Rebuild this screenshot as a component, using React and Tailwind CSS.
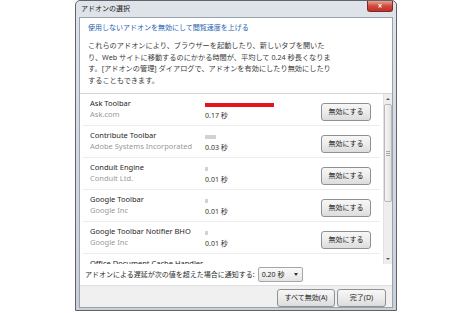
// Internet Explorer "アドオンの選択" dialog, Windows 7 style.

const ADDONS = [
  { name: 'Ask Toolbar', vendor: 'Ask.com', time: '0.17 秒', bar: 69, slow: true },
  { name: 'Contribute Toolbar', vendor: 'Adobe Systems Incorporated', time: '0.03 秒', bar: 11 },
  { name: 'Conduit Engine', vendor: 'Conduit Ltd.', time: '0.01 秒', bar: 3 },
  { name: 'Google Toolbar', vendor: 'Google Inc', time: '0.01 秒', bar: 3 },
  { name: 'Google Toolbar Notifier BHO', vendor: 'Google Inc', time: '0.01 秒', bar: 3 },
  // only the top of this row shows above the list's bottom edge
  { name: 'Office Document Cache Handler', partial: true },
]

const BTN =
  'flex items-center justify-center rounded-[3px] border border-[#8f9091] bg-gradient-to-b from-[#f7f7f7] via-[#ececec] to-[#dcdcdc] text-[7px] leading-[10px] text-[#1e1e1e]'

function AddonRow({ addon }) {
  if (addon.partial) {
    return (
      <div className="h-[32px] shrink-0 mx-[3px] pl-[7px] pt-[4px] flex flex-col">
        <span className="text-[7.5px] leading-[10px] text-[#1e1e1e] whitespace-nowrap">{addon.name}</span>
      </div>
    )
  }

  return (
    <div className="h-[32px] shrink-0 flex border-b border-[#ececec] mx-[3px]">
      {/* name + vendor */}
      <div className="w-[122px] pl-[7px] pt-[4px] flex flex-col">
        <span className="text-[7.5px] leading-[10px] text-[#1e1e1e] whitespace-nowrap">{addon.name}</span>
        <span className="mt-[1px] text-[7.5px] leading-[10px] text-[#9a9a9a] whitespace-nowrap">{addon.vendor}</span>
      </div>

      {/* load time bar */}
      <div className="w-[116px] pt-[9px] flex flex-col">
        <div
          className={`h-[4px] ${addon.slow ? 'bg-[#e8121a]' : 'bg-[#d2d2d2]'}`}
          style={{ width: addon.bar }}
        />
        <span className="mt-[4px] text-[7px] leading-[10px] text-[#333]">{addon.time}</span>
      </div>

      <div className="pt-[9px]">
        <button className={`${BTN} w-[50px] h-[18px]`}>無効にする</button>
      </div>
    </div>
  )
}

function Scrollbar() {
  return (
    <div className="w-[9px] shrink-0 bg-[#eeeeee] border-l border-[#e2e2e2] flex flex-col items-center">
      <div className="h-[10px] flex items-center justify-center">
        <div className="w-0 h-0 border-l-[2px] border-r-[2px] border-b-[2px] border-l-transparent border-r-transparent border-b-[#555]" />
      </div>
      <div className="w-[8px] h-[98px] rounded-[2px] border border-[#b8b8b8] bg-gradient-to-r from-[#f6f6f6] to-[#e2e2e2] flex flex-col items-center justify-center gap-[1px]">
        <div className="w-[4px] h-px bg-[#a8a8a8]" />
        <div className="w-[4px] h-px bg-[#a8a8a8]" />
        <div className="w-[4px] h-px bg-[#a8a8a8]" />
      </div>
      <div className="mt-auto h-[10px] flex items-center justify-center">
        <div className="w-0 h-0 border-l-[2px] border-r-[2px] border-t-[2px] border-l-transparent border-r-transparent border-t-[#555]" />
      </div>
    </div>
  )
}

export default function App() {
  return (
    <div className="w-[470px] h-[313px] bg-white overflow-hidden font-['Noto_Sans','Noto_Sans_CJK_JP',sans-serif]">
      {/* window frame */}
      <div className="ml-[75px] w-[322px] h-[311px] flex flex-col rounded-t-[5px] border border-[#5f646b] bg-gradient-to-b from-[#dfe4ea] via-[#d3d9e0] to-[#c9d0d8] px-[3px] pb-[2px]">
        {/* title bar */}
        <div className="h-[16px] shrink-0 flex items-start">
          <span className="mt-[3px] ml-[2px] text-[7px] leading-[9px] text-[#1b1b1b]">アドオンの選択</span>
          <div className="ml-auto w-[26px] h-[11px] rounded-b-[3px] border border-t-0 border-[#7a2c24] bg-gradient-to-b from-[#e9a193] via-[#d2493a] to-[#c0302a] flex items-center justify-center text-[8px] leading-none font-bold text-white">
            ×
          </div>
        </div>

        {/* client area */}
        <div className="flex-1 flex flex-col bg-white border border-[#9aa2ab]">
          <p className="mt-[5px] pl-[8px] text-[7px] leading-[10px] text-[#2563b0] whitespace-nowrap">
            使用しないアドオンを無効にして閲覧速度を上げる
          </p>
          <div className="mt-[7px] pl-[8px] text-[7.2px] leading-[11.5px] text-[#3a3a3a] whitespace-nowrap flex flex-col">
            <span>これらのアドオンにより、ブラウザーを起動したり、新しいタブを開いた</span>
            <span>り、Web サイトに移動するのにかかる時間が、平均して 0.24 秒長くなりま</span>
            <span>す。[アドオンの管理] ダイアログで、アドオンを有効にしたり無効にしたり</span>
            <span>することもできます。</span>
          </div>

          {/* add-on list */}
          <div className="mt-[7px] h-[171px] shrink-0 flex border-t border-[#d4d4d4] overflow-hidden">
            <div className="flex-1 flex flex-col overflow-hidden">
              {ADDONS.map((a) => (
                <AddonRow key={a.name} addon={a} />
              ))}
            </div>
            <Scrollbar />
          </div>

          {/* notify threshold */}
          <div className="h-[21px] shrink-0 flex items-center pl-[5px]">
            <span className="text-[7px] leading-[10px] text-[#2a2a2a] whitespace-nowrap">
              アドオンによる遅延が次の値を超えた場合に通知する:
            </span>
            <div className="ml-[3px] w-[45px] h-[15px] rounded-[2px] border border-[#a6a6a6] bg-gradient-to-b from-[#fafafa] to-[#e4e4e4] flex items-center pl-[3px] pr-[4px]">
              <span className="text-[7px] leading-[10px] text-[#222] whitespace-nowrap">0.20 秒</span>
              <div className="ml-auto w-0 h-0 border-l-[2px] border-r-[2px] border-t-[3px] border-l-transparent border-r-transparent border-t-[#333]" />
            </div>
          </div>

          {/* button strip */}
          <div className="flex-1 flex justify-end items-start gap-[2px] pt-[3px] pr-[6px] bg-[#f0f0f0] border-t border-[#dedede]">
            <button className={`${BTN} w-[58px] h-[18px]`}>すべて無効(A)</button>
            <button className={`${BTN} w-[49px] h-[18px]`}>完了(D)</button>
          </div>
        </div>
      </div>
    </div>
  )
}
